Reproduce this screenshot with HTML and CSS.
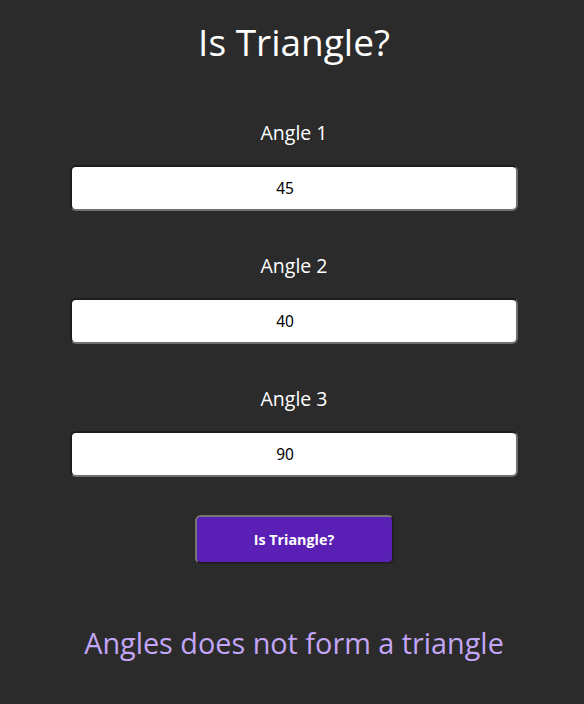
FILE: index.html
```html
<!DOCTYPE html>
<html lang="en">
<head>
<meta charset="utf-8">
<title>Is Triangle?</title>
<link rel="stylesheet" href="styles.css">
</head>
<body>
<main class="app">
  <h1 class="title">Is Triangle?</h1>
  <div class="field">
    <label class="label" for="a1">Angle 1</label>
    <input class="input" id="a1" type="number" value="45">
  </div>
  <div class="field">
    <label class="label" for="a2">Angle 2</label>
    <input class="input" id="a2" type="number" value="40">
  </div>
  <div class="field">
    <label class="label" for="a3">Angle 3</label>
    <input class="input" id="a3" type="number" value="90">
  </div>
  <button class="btn" type="button">Is Triangle?</button>
  <p class="result">Angles does not form a triangle</p>
</main>
</body>
</html>
```
FILE: styles.css
```css
html, body {
  margin: 0;
  padding: 0;
  background: #2b2b2b;
}
body {
  font-family: "Open Sans", "Noto Sans", sans-serif;
  color: #ffffff;
}
.app {
  display: flex;
  flex-direction: column;
  align-items: center;
  text-align: center;
  padding-left: 4px;
}
.title {
  margin: 18px 0 0;
  font-size: 37px;
  line-height: 48px;
  font-weight: 400;
}
.field {
  display: flex;
  flex-direction: column;
  align-items: center;
  margin-top: 55px;
}
.field + .field {
  margin-top: 43px;
}
.label {
  font-size: 19.5px;
  line-height: 24px;
  color: #ffffff;
}
.input {
  margin-top: 20px;
  box-sizing: border-box;
  width: 448px;
  height: 46px;
  background: #ffffff;
  border: 2px solid;
  border-color: #1c1c1c #6f6f6f #6f6f6f #1c1c1c;
  border-radius: 6px;
  text-align: center;
  font-family: "Noto Sans", sans-serif;
  font-size: 15.5px;
  color: #000000;
  padding: 0 22px 0 4px;
  appearance: textfield;
  -moz-appearance: textfield;
}
.input::-webkit-inner-spin-button,
.input::-webkit-outer-spin-button {
  -webkit-appearance: none;
  margin: 0;
}
.btn {
  margin-top: 38px;
  box-sizing: border-box;
  width: 199px;
  height: 49px;
  background: #5a1fb5;
  border: 2px solid;
  border-color: #767676 #1f1f1f #1f1f1f #767676;
  border-radius: 6px;
  color: #ffffff;
  font-family: "Open Sans", "Noto Sans", sans-serif;
  font-weight: 700;
  font-size: 14.3px;
  cursor: pointer;
}
.result {
  margin: 61px 0 0;
  font-size: 28.8px;
  line-height: 36px;
  color: #c3a6f7;
}
```
